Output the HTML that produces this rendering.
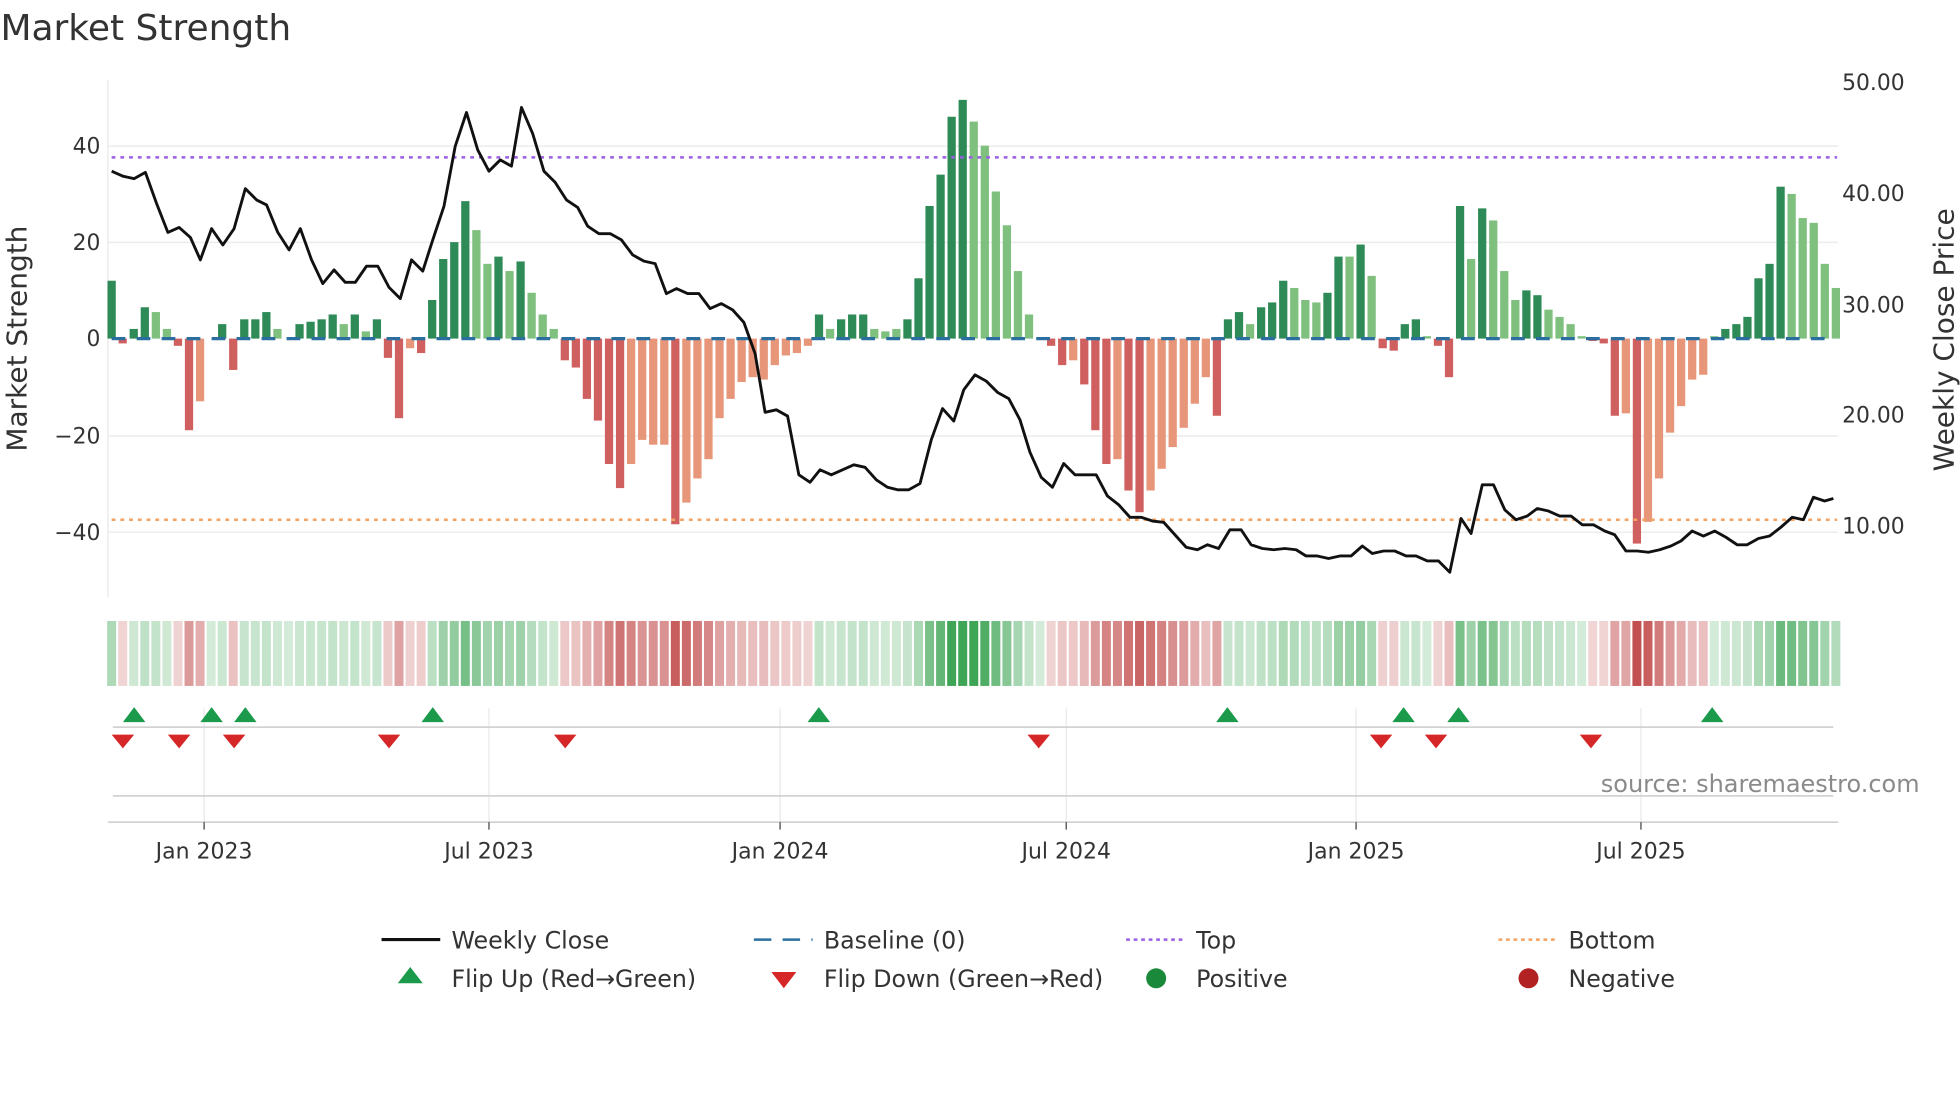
<!DOCTYPE html>
<html><head><meta charset="utf-8"><style>
html,body{margin:0;padding:0;background:#fff;}
svg{display:block;}
text{font-family:"DejaVu Sans","Liberation Sans",sans-serif;fill:#333;}
</style></head><body>
<svg id="s" width="1960" height="1102" viewBox="0 0 1568 882" xmlns="http://www.w3.org/2000/svg">
<rect width="1568" height="882" fill="#fff"/>
<text x="0" y="32" font-size="28.8">Market Strength</text>
<g stroke="#ececec" stroke-width="1.2">
<line x1="86" y1="117" x2="1471" y2="117"/><line x1="86" y1="194" x2="1471" y2="194"/>
<line x1="86" y1="349" x2="1471" y2="349"/><line x1="86" y1="426" x2="1471" y2="426"/>
<line x1="86" y1="64" x2="86" y2="478"/>
</g>
<g font-size="17.5" text-anchor="end">
<text x="80" y="123">40</text><text x="80" y="200">20</text><text x="80" y="277">0</text>
<text x="80" y="355">−20</text><text x="80" y="432">−40</text>
</g>
<g font-size="17.5">
<text x="1474" y="72">50.00</text><text x="1474" y="161">40.00</text><text x="1474" y="250">30.00</text>
<text x="1474" y="338">20.00</text><text x="1474" y="427">10.00</text>
</g>
<text font-size="22.4" text-anchor="middle" transform="translate(21,271) rotate(-90)">Market Strength</text>
<text font-size="22.4" text-anchor="middle" transform="translate(1563,272) rotate(-90)">Weekly Close Price</text>
<g id="bars"></g>
<line x1="89" y1="271" x2="1468" y2="271" stroke="#2a6fa0" stroke-width="2.6" stroke-dasharray="11,9"/>
<line x1="89" y1="126" x2="1470" y2="126" stroke="#9b5de5" stroke-width="2" stroke-dasharray="3,4"/>
<line x1="89" y1="416" x2="1470" y2="416" stroke="#f4a261" stroke-width="2" stroke-dasharray="3,4"/>
<polyline id="price" fill="none" stroke="#111" stroke-width="2.3" stroke-linejoin="round" points="89,137 98,141 107,143 116,138 125,163 134,186 143,182 152,190 160,208 169,183 178,196 187,183 196,151 205,160 213,164 222,186 231,200 240,183 249,208 258,227 267,216 276,226 284,226 293,213 302,213 311,230 320,239 329,208 338,217 346,192 355,165 364,117 373,90 382,120 391,137 400,128 409,133 417,86 426,107 435,137 444,146 453,160 462,166 470,181 479,187 488,187 497,192 506,204 515,209 524,211 533,235 541,231 550,235 559,235 568,247 577,243 586,248 595,258 604,283 612,330 621,328 630,333 639,380 648,386 656,376 665,380 674,376 683,372 692,374 701,384 710,390 718,392 727,392 736,387 745,352 754,327 763,337 771,312 780,300 789,305 798,314 807,319 816,336 824,362 833,382 842,390 851,371 860,380 868,380 877,380 886,397 895,404 904,414 913,414 922,417 931,418 940,428 949,438 958,440 966,436 975,439 984,424 993,424 1001,436 1010,439 1019,440 1028,439 1037,440 1045,445 1054,445 1063,447 1072,445 1081,445 1090,437 1098,443 1107,441 1116,441 1125,445 1133,445 1142,449 1151,449 1160,458 1169,415 1177,427 1186,388 1195,388 1204,408 1213,416 1222,413 1230,407 1239,409 1248,413 1257,413 1266,420 1275,420 1284,425 1292,428 1301,441 1310,441 1319,442 1328,440 1337,437 1345,433 1354,425 1363,429 1372,425 1381,430 1390,436 1398,436 1407,431 1416,429 1425,422 1434,414 1443,416 1451,398 1460,401 1467,399"/>
<g id="heat"></g>
<g stroke="#e8e8e8" stroke-width="1">
<line x1="163" y1="567" x2="163" y2="658"/><line x1="391" y1="567" x2="391" y2="658"/>
<line x1="624" y1="567" x2="624" y2="658"/><line x1="853" y1="567" x2="853" y2="658"/>
<line x1="1085" y1="567" x2="1085" y2="658"/><line x1="1313" y1="567" x2="1313" y2="658"/>
</g>
<line x1="90" y1="582" x2="1467" y2="582" stroke="#ccc" stroke-width="1.2"/>
<line x1="90" y1="637" x2="1467" y2="637" stroke="#ccc" stroke-width="1.2"/>
<line x1="86" y1="658" x2="1471" y2="658" stroke="#ccc" stroke-width="1.2"/>
<g id="marks"></g>
<text x="1536" y="634" font-size="19.2" text-anchor="end" style="fill:#8a8a8a">source: sharemaestro.com</text>
<g stroke="#444" stroke-width="1">
<line x1="163" y1="658" x2="163" y2="664"/><line x1="391" y1="658" x2="391" y2="664"/><line x1="624" y1="658" x2="624" y2="664"/>
<line x1="853" y1="658" x2="853" y2="664"/><line x1="1085" y1="658" x2="1085" y2="664"/><line x1="1313" y1="658" x2="1313" y2="664"/>
</g>
<g font-size="17.6" text-anchor="middle">
<text x="163" y="687">Jan 2023</text><text x="391" y="687">Jul 2023</text><text x="624" y="687">Jan 2024</text>
<text x="853" y="687">Jul 2024</text><text x="1085" y="687">Jan 2025</text><text x="1313" y="687">Jul 2025</text>
</g>
<g font-size="19">
<line x1="305" y1="752" x2="352" y2="752" stroke="#111" stroke-width="2.5"/><text x="361" y="759">Weekly Close</text>
<line x1="603" y1="752" x2="650" y2="752" stroke="#2a6fa0" stroke-width="2" stroke-dasharray="14,9"/><text x="659" y="759">Baseline (0)</text>
<line x1="901" y1="752" x2="948" y2="752" stroke="#9b5de5" stroke-width="2" stroke-dasharray="3,3"/><text x="957" y="759">Top</text>
<line x1="1199" y1="752" x2="1246" y2="752" stroke="#f4a261" stroke-width="2" stroke-dasharray="3,3"/><text x="1255" y="759">Bottom</text>
<polygon points="328,774 338,787 318,787" fill="#1a9a4a"/><text x="361" y="790">Flip Up (Red→Green)</text>
<polygon points="617,778 637,778 627,791" fill="#d62728"/><text x="659" y="790">Flip Down (Green→Red)</text>
<circle cx="925" cy="783" r="8" fill="#1a8a3a"/><text x="957" y="790">Positive</text>
<circle cx="1223" cy="783" r="8" fill="#b22222"/><text x="1255" y="790">Negative</text>
</g>
</svg>
<script>
var d=[[12,1],[-1,1],[2,1],[6.5,1],[5.5,0],[2,0],[-1.5,1],[-19,1],[-13,0],[0,0],[3,1],[-6.5,1],[4,1],[4,1],[5.5,1],[2,0],[0,0],[3,1],[3.5,1],[4,1],[5,1],[3,0],[5,1],[1.5,0],[4,1],[-4,1],[-16.5,1],[-2,0],[-3,1],[8,1],[16.5,1],[20,1],[28.5,1],[22.5,0],[15.5,0],[17,1],[14,0],[16,1],[9.5,0],[5,0],[2,0],[-4.5,1],[-6,1],[-12.5,1],[-17,1],[-26,1],[-31,1],[-26,0],[-21,0],[-22,0],[-22,0],[-38.5,1],[-34,0],[-29,0],[-25,0],[-16.5,0],[-12.5,0],[-9,0],[-8,0],[-8.5,0],[-5.5,0],[-3.5,0],[-3,0],[-1.5,0],[5,1],[2,0],[4,1],[5,1],[5,1],[2,0],[1.5,0],[2,0],[4,1],[12.5,1],[27.5,1],[34,1],[46,1],[49.5,1],[45,0],[40,0],[30.5,0],[23.5,0],[14,0],[5,0],[0,0],[-1.5,1],[-5.5,1],[-4.5,0],[-9.5,1],[-19,1],[-26,1],[-25,0],[-31.5,1],[-36,1],[-31.5,0],[-27,0],[-22.5,0],[-18.5,0],[-13.5,0],[-8,0],[-16,1],[4,1],[5.5,1],[3,0],[6.5,1],[7.5,1],[12,1],[10.5,0],[8,0],[7.5,0],[9.5,1],[17,1],[17,0],[19.5,1],[13,0],[-2,1],[-2.5,1],[3,1],[4,1],[0.5,0],[-1.5,1],[-8,1],[27.5,1],[16.5,0],[27,1],[24.5,0],[14,0],[8,0],[10,1],[9,1],[6,0],[4.5,0],[3,0],[0.5,0],[-0.5,1],[-1,1],[-16,1],[-15.5,0],[-42.5,1],[-38,0],[-29,0],[-19.5,0],[-14,0],[-8.5,0],[-7.5,0],[0.5,0],[2,1],[3,1],[4.5,1],[12.5,1],[15.5,1],[31.5,1],[30,0],[25,0],[24,0],[15.5,0],[10.5,0]];
var ns="http://www.w3.org/2000/svg",B=document.getElementById('bars'),H=document.getElementById('heat'),M=document.getElementById('marks');
function el(p,t,a){var e=document.createElementNS(ns,t);for(var k in a)e.setAttribute(k,a[k]);p.appendChild(e);return e;}
var step=(1469-89)/156;
d.forEach(function(b,i){var x=89+i*step,v=b[0],h=Math.abs(v)*3.86;
 var c=v>=0?(b[1]?'#2e8b57':'#7fc07f'):(b[1]?'#d06060':'#e8967a');
 if(h>0.3)el(B,'rect',{x:x-3.3,y:v>=0?271-h:271,width:6.6,height:h,fill:c});
 var a=Math.min(1,0.22+Math.abs(v)/45*0.78);
 el(H,'rect',{x:x-3.6,y:497,width:7.2,height:52,fill:v>=0?'#3fa556':'#c04848','fill-opacity':a});
});
[107,169,196,346,655,982,1123,1167,1370].forEach(function(x){el(M,'polygon',{points:(x)+',566 '+(x+9)+',578 '+(x-9)+',578',fill:'#1a9a4a'});});
[98,143,187,311,452,831,1105,1149,1273].forEach(function(x){el(M,'polygon',{points:(x-9)+',588 '+(x+9)+',588 '+x+',599',fill:'#d62728'});});
</script>
</body></html>
